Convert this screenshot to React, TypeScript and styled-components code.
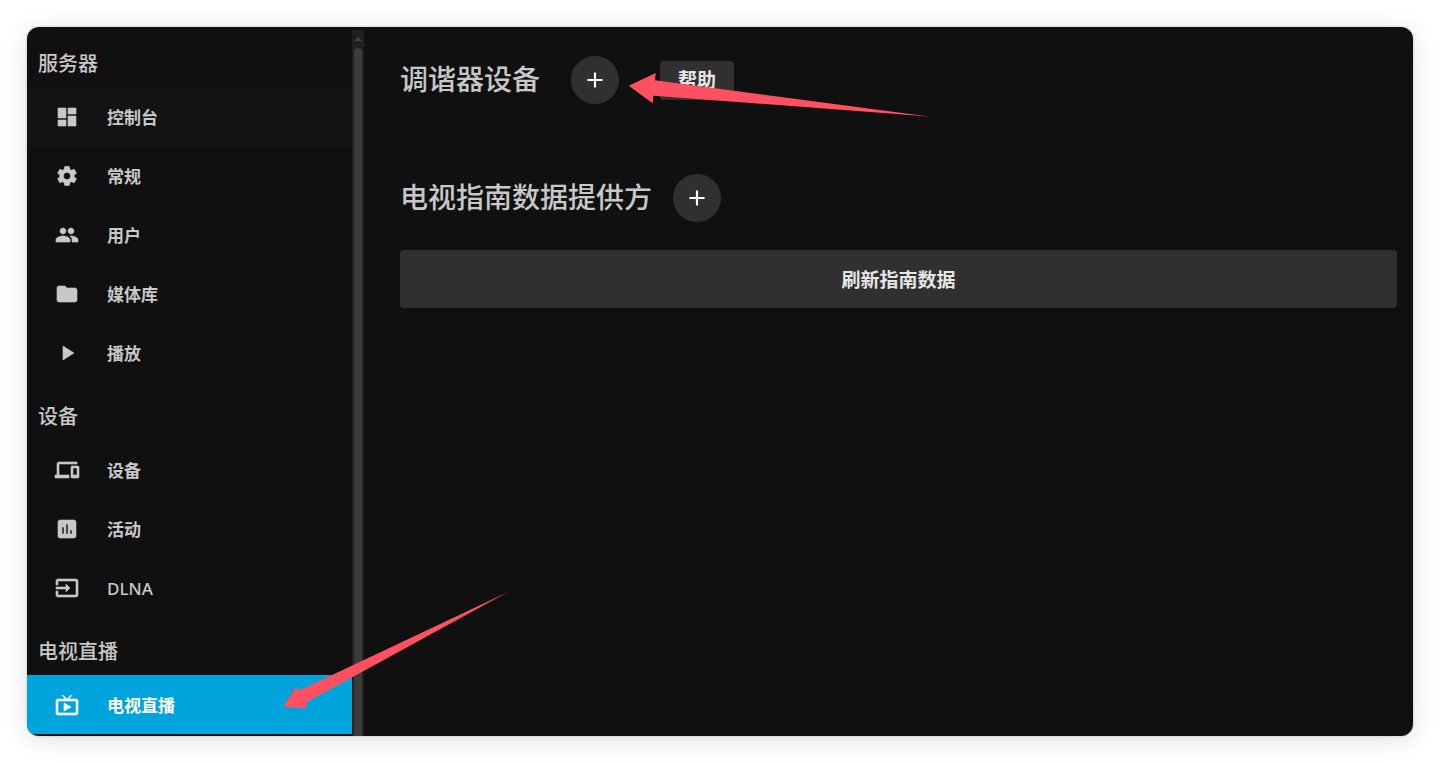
import React from "react";
import styled, { createGlobalStyle } from "styled-components";
import type { IconType } from "react-icons";
import {
  MdDashboard, MdSettings, MdPeople, MdFolder, MdPlayArrow, MdDevices,
  MdInsertChart, MdInput, MdLiveTv, MdAdd,
} from "react-icons/md";

const GlobalStyle = createGlobalStyle`
  * { box-sizing: border-box; }
  body {
    margin: 0;
    background: #fff;
    font-family: "Noto Sans", "Noto Sans CJK SC", sans-serif;
  }
  button { font: inherit; border: 0; cursor: pointer; }
`;

const Page = styled.div`
  display: flex;
  min-height: 100vh;
  padding: 27px;
`;

const Window = styled.div`
  position: relative;
  display: flex;
  flex: 1;
  overflow: hidden;
  border-radius: 12px;
  background: #101010;
  color: #c8c8c8;
`;

const Shadow = styled.div`
  display: flex;
  flex: 1;
  border-radius: 12px;
  box-shadow: 0 0 2px rgba(0, 0, 0, 0.3), 0 4px 24px rgba(0, 0, 0, 0.12);
`;

const Sidebar = styled.nav`
  flex: none;
  width: 325px;
  padding-top: 2px;
`;

const SectionTitle = styled.h2`
  display: flex;
  align-items: center;
  height: 58px;
  margin: 0;
  padding: 11px 11px 0;
  font-size: 20px;
  font-weight: 500;
  line-height: 28px;
`;

const NavLink = styled.a<{ $state?: "hover" | "active" }>`
  display: flex;
  align-items: center;
  gap: 28px;
  height: 59px;
  padding: 0 28px;
  background: ${(p) => (p.$state === "active" ? "#00a4dc" : p.$state === "hover" ? "#131313" : "transparent")};
  color: ${(p) => (p.$state === "active" ? "#fff" : "#c8c8c8")};
  text-decoration: none;

  svg {
    flex: none;
    width: 24px;
    height: 24px;
    overflow: visible;
    stroke-width: 0.6;
  }

  path[fill="none"] { stroke: none; }
`;

const NavLabel = styled.span<{ $latin?: boolean }>`
  padding-top: 3px;
  font-size: 17px;
  font-weight: ${(p) => (p.$latin ? 500 : 700)};
  line-height: 24px;
`;

const Scrollbar = styled.div`
  display: flex;
  flex: none;
  flex-direction: column;
  align-items: center;
  width: 12px;
  margin-top: 3px;
  background: #202020;
`;

const ScrollUp = styled.svg`
  flex: none;
  width: 12px;
  height: 18px;
  fill: #444;
`;

const Thumb = styled.div`
  flex: 1;
  width: 8px;
  border-radius: 4px 4px 0 0;
  background: #3b3b3b;
`;

const Main = styled.main`
  flex: 1;
  min-width: 0;
  padding: 29px 16px 0 36px;
`;

const Section = styled.section`
  display: flex;
  align-items: center;
  height: 48px;
  margin-bottom: 70px;

  & + & { margin-bottom: 28px; }
`;

const Title = styled.h1<{ $gap: number }>`
  margin: 0 ${(p) => p.$gap}px 0 0;
  padding-bottom: 2px;
  font-size: 28px;
  font-weight: 500;
  line-height: 40px;
`;

const RoundButton = styled.button`
  display: grid;
  place-items: center;
  width: 48px;
  height: 48px;
  padding: 0;
  border-radius: 50%;
  background: #303030;
  color: #fff;

  svg { width: 26px; height: 26px; }
`;

const RaisedButton = styled.button<{ $block?: boolean }>`
  width: ${(p) => (p.$block ? "100%" : "auto")};
  height: ${(p) => (p.$block ? 58 : 39)}px;
  margin-left: ${(p) => (p.$block ? 0 : 41)}px;
  padding: ${(p) => (p.$block ? 2 : 0)}px 18px 0;
  border-radius: 4px;
  background: #303030;
  color: #e6e6e6;
  && { font-size: 19px; font-weight: 700; line-height: 28px; }
`;

const Pointers = styled.svg`
  position: absolute;
  top: 0;
  left: 0;
  width: 910px;
  height: 709px;
  fill: #ff5061;
  pointer-events: none;
`;

type Item = { label: string; icon: IconType; state?: "hover" | "active"; latin?: boolean };

const sections: { title: string; items: Item[] }[] = [
  {
    title: "服务器",
    items: [
      { label: "控制台", icon: MdDashboard, state: "hover" },
      { label: "常规", icon: MdSettings },
      { label: "用户", icon: MdPeople },
      { label: "媒体库", icon: MdFolder },
      { label: "播放", icon: MdPlayArrow },
    ],
  },
  {
    title: "设备",
    items: [
      { label: "设备", icon: MdDevices },
      { label: "活动", icon: MdInsertChart },
      { label: "DLNA", icon: MdInput, latin: true },
    ],
  },
  { title: "电视直播", items: [{ label: "电视直播", icon: MdLiveTv, state: "active" }] },
];

export default function App() {
  return (
    <Page lang="zh-CN">
      <GlobalStyle />
      <Shadow>
        <Window>
          <Sidebar>
            {sections.map((s) => (
              <React.Fragment key={s.title}>
                <SectionTitle>{s.title}</SectionTitle>
                {s.items.map(({ label, icon: Icon, state, latin }) => (
                  <NavLink key={label} href="#" $state={state}>
                    <Icon />
                    <NavLabel $latin={latin}>{label}</NavLabel>
                  </NavLink>
                ))}
              </React.Fragment>
            ))}
          </Sidebar>
          <Scrollbar>
            <ScrollUp viewBox="0 0 12 18"><path d="M2 11 6 7l4 4z" /></ScrollUp>
            <Thumb />
          </Scrollbar>
          <Main>
            <Section>
              <Title $gap={31}>调谐器设备</Title>
              <RoundButton aria-label="添加调谐器设备"><MdAdd /></RoundButton>
              <RaisedButton>帮助</RaisedButton>
            </Section>
            <Section>
              <Title $gap={21}>电视指南数据提供方</Title>
              <RoundButton aria-label="添加数据提供方"><MdAdd /></RoundButton>
            </Section>
            <RaisedButton $block>刷新指南数据</RaisedButton>
          </Main>
          <Pointers viewBox="27 27 910 709" aria-hidden="true">
            <path d="M628.7 85.7 655.7 73 655 80.3 929 116.4 653.3 95.7 652.7 103.3z" />
            <path d="M283 707 296.3 686.3 298.7 690.7 508 592 305.7 702.7 307.3 708.3z" />
          </Pointers>
        </Window>
      </Shadow>
    </Page>
  );
}
